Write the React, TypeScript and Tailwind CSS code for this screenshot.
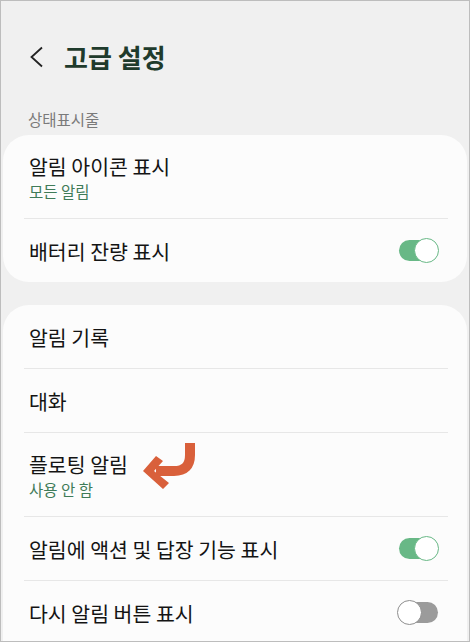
import React from "react";

function Toggle({ on }: { on: boolean }) {
  if (on) {
    return (
      <div className="relative w-[41px] h-[25px] shrink-0">
        <div className="absolute left-[1px] right-[2px] top-[2px] h-[21px] rounded-full bg-[#68b886]" />
        <div className="absolute right-0 top-0 w-[25px] h-[25px] rounded-full bg-white border-[1.5px] border-[#68b886]" />
      </div>
    );
  }
  return (
    <div className="relative w-[42px] h-[25px] shrink-0">
      <div className="absolute left-[2px] right-[1px] top-[2px] h-[21px] rounded-full bg-[#9b9b9b]" />
      <div className="absolute left-0 top-0 w-[25px] h-[25px] rounded-full bg-white border-[1.5px] border-[#8e8e8e]" />
    </div>
  );
}

function Divider() {
  return <div className="h-px bg-[#e7e7e7] ml-[21px] mr-[19px]" />;
}

function SimpleRow({ title, toggle }: { title: string; toggle?: boolean }) {
  return (
    <div className="h-[63px] flex items-center pl-[26px] pr-[28px]">
      <div className="flex-1 text-[20.5px] leading-[24px] text-[#141414]">{title}</div>
      {toggle !== undefined && <Toggle on={toggle} />}
    </div>
  );
}

function SubRow({ title, sub, children }: { title: string; sub: string; children?: React.ReactNode }) {
  return (
    <div className="pt-[19px] pb-[18px] pl-[26px] pr-[28px]">
      <div className="flex items-center gap-[10px]">
        <div className="text-[20.5px] leading-[24px] text-[#141414]">{title}</div>
        {children}
      </div>
      <div className="mt-[4px] text-[15.5px] leading-[18px] text-[#3f7b58]">{sub}</div>
    </div>
  );
}

function CurvedArrow() {
  return (
    <div className="relative w-0 h-[24px]">
      <svg
        className="absolute left-[4px] top-[-10px]"
        width="56"
        height="50"
        viewBox="0 0 56 50"
      >
        <path d="M48 1 V13 Q48 29 32 29 H14" stroke="#d9603b" strokeWidth="10" fill="none" />
        <polygon points="1,29 14,14 21,19 12,29 27,41 21,47" fill="#d9603b" />
      </svg>
    </div>
  );
}

export default function App() {
  return (
    <div
      className="w-[470px] h-[642px] overflow-hidden bg-[#f0f0f0] border border-[#bdbdbd]"
      style={{ fontFamily: '"Noto Sans CJK KR", "Noto Sans", sans-serif' }}
    >
      <div className="mt-[25px] h-[62px] flex items-center pl-[28px]">
        <svg width="16" height="22" viewBox="0 0 16 22" className="shrink-0">
          <path d="M13 1.5 L2.5 11 L13 20.5" stroke="#222" strokeWidth="1.8" fill="none" />
        </svg>
        <div className="ml-[19px] text-[26px] leading-[30px] font-bold text-[#1f3b2c]">고급 설정</div>
      </div>
      <div className="mt-[21px] pl-[27px] text-[15.5px] leading-[20px] text-[#7a7a7a]">상태표시줄</div>
      <div className="mt-[6px] mx-[2px] rounded-[26px] bg-[#fcfcfc]">
        <SubRow title="알림 아이콘 표시" sub="모든 알림" />
        <Divider />
        <SimpleRow title="배터리 잔량 표시" toggle={true} />
      </div>
      <div className="mt-[23px] mx-[2px] rounded-[26px] bg-[#fcfcfc] pb-[40px]">
        <SimpleRow title="알림 기록" />
        <Divider />
        <SimpleRow title="대화" />
        <Divider />
        <SubRow title="플로팅 알림" sub="사용 안 함">
          <CurvedArrow />
        </SubRow>
        <Divider />
        <SimpleRow title="알림에 액션 및 답장 기능 표시" toggle={true} />
        <Divider />
        <SimpleRow title="다시 알림 버튼 표시" toggle={false} />
      </div>
    </div>
  );
}
